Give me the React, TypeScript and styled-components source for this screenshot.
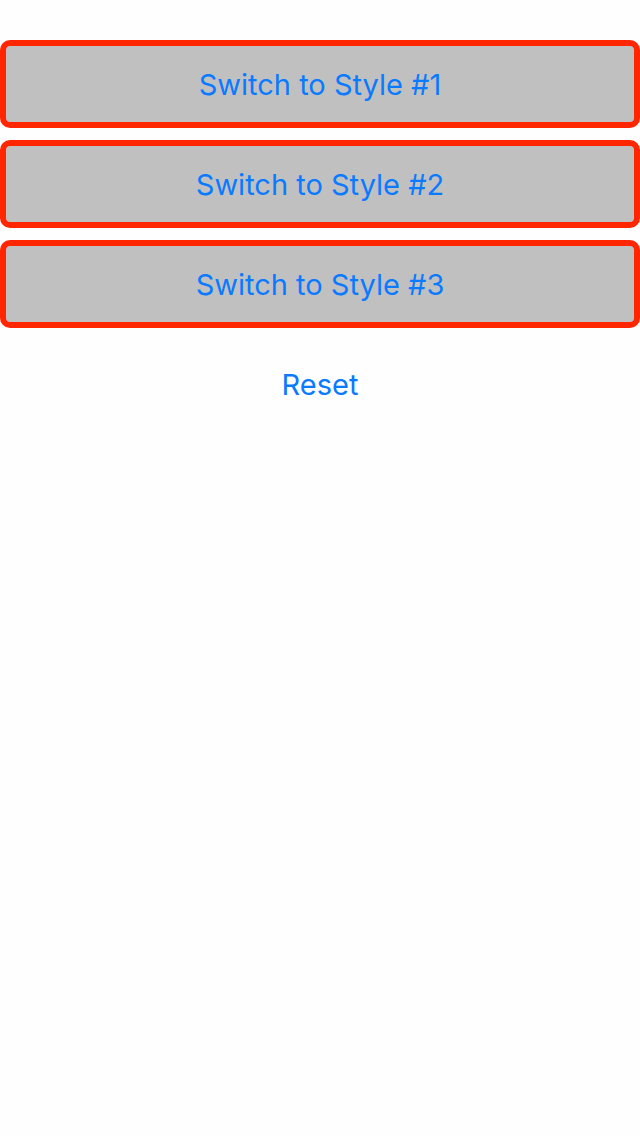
import React from "react";
import styled, { createGlobalStyle } from "styled-components";

const Global = createGlobalStyle`
  html, body { margin: 0; padding: 0; background: #fefefe; }
  body { font-family: Inter, "Noto Sans", sans-serif; }
`;

const Page = styled.div`
  display: flex;
  flex-direction: column;
  gap: 12px;
  padding-top: 40px;
  width: 640px;
  min-height: 1136px;
  box-sizing: border-box;
`;

const StyleButton = styled.button`
  box-sizing: border-box;
  height: 88px;
  width: 100%;
  margin: 0;
  background: #c0c0c0;
  border: 6px solid #ff2600;
  border-radius: 10px;
  color: #0a7aff;
  font-family: Inter, "Noto Sans", sans-serif;
  font-size: 29px;
  font-weight: 400;
  display: flex;
  align-items: center;
  justify-content: center;
  padding: 0;
`;

const PlainButton = styled.button`
  height: 88px;
  width: 100%;
  background: transparent;
  border: none;
  color: #0a7aff;
  font-family: Inter, "Noto Sans", sans-serif;
  font-size: 29px;
  font-weight: 400;
  padding: 0;
`;

export default function App() {
  return (
    <>
      <Global />
      <Page>
        {[1, 2, 3].map((n) => (
          <StyleButton key={n}>Switch to Style #{n}</StyleButton>
        ))}
        <PlainButton>Reset</PlainButton>
      </Page>
    </>
  );
}
